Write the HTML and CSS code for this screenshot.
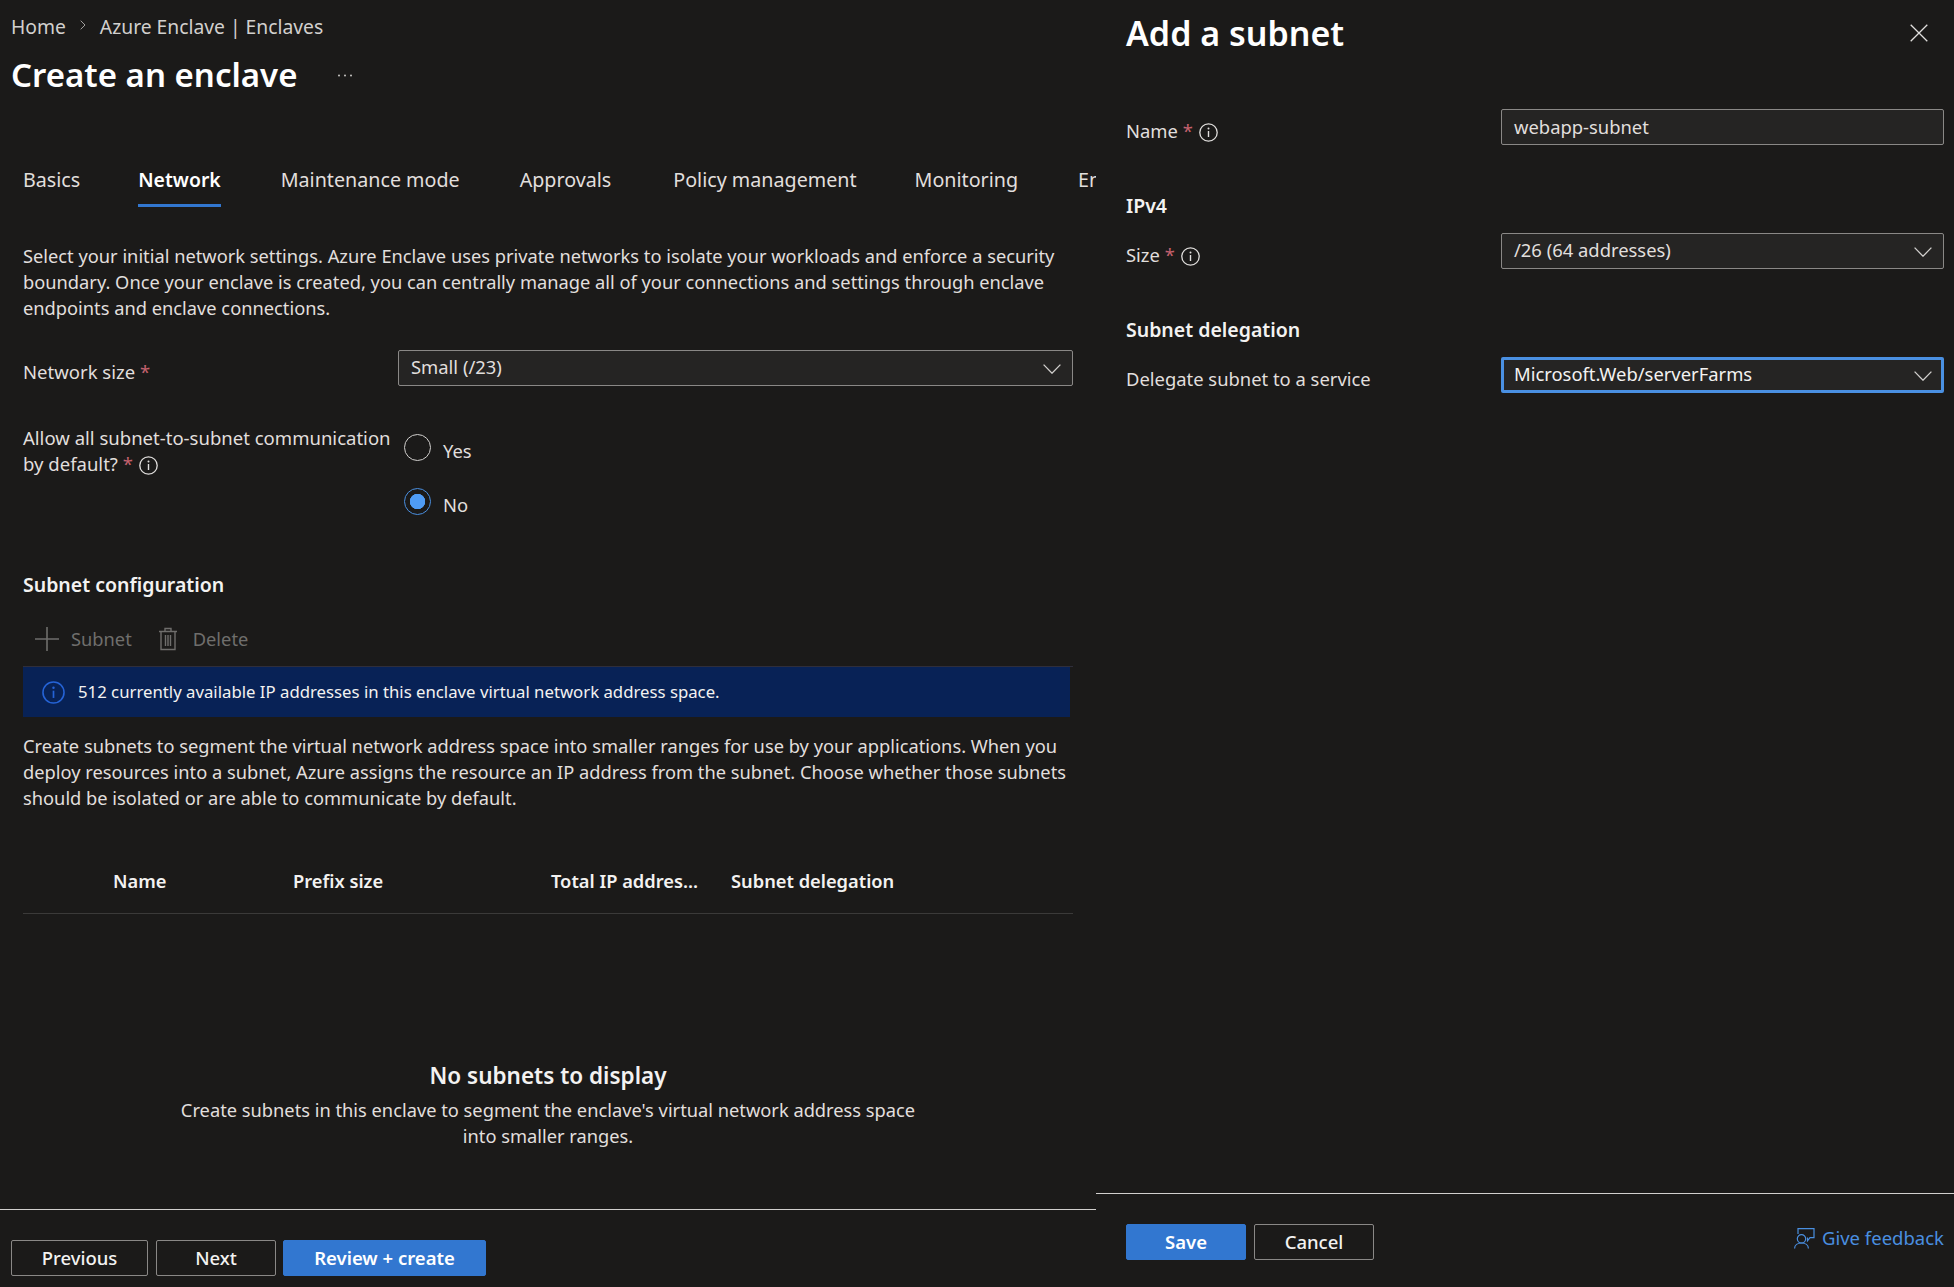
FILE: index.html
```html
<!DOCTYPE html>
<html lang="en">
<head>
<meta charset="utf-8">
<title>Create an enclave</title>
<link rel="stylesheet" href="styles.css">
</head>
<body>
<svg class="defs" width="0" height="0" aria-hidden="true">
  <symbol id="info" viewBox="0 0 19 19"><circle cx="9.5" cy="9.5" r="8.7" fill="none" stroke="currentColor" stroke-width="1.3"/><path d="M9.5 8v6" stroke="currentColor" stroke-width="1.4" fill="none"/><circle cx="9.5" cy="5.6" r="1" fill="currentColor"/></symbol>
  <symbol id="chev" viewBox="0 0 18 10"><path d="M.6.6 9 9.2 17.4.6" fill="none" stroke="currentColor" stroke-width="1.3"/></symbol>
</svg>

<section class="main-panel">
  <div class="main-scroll">
    <nav class="breadcrumb"><span>Home</span><svg class="crumb-sep" viewBox="0 0 6 10" width="6" height="10"><path d="M.7.7 5 5 .7 9.3" fill="none" stroke="currentColor"/></svg><span>Azure Enclave | Enclaves</span></nav>
    <div class="title-row"><h1 class="page-title">Create an enclave</h1><svg class="more" viewBox="0 0 16 3" width="16" height="3"><circle cx="2" cy="1.5" r="1" fill="currentColor"/><circle cx="8" cy="1.5" r="1" fill="currentColor"/><circle cx="14" cy="1.5" r="1" fill="currentColor"/></svg></div>
    <div class="tabs">
      <span class="tab">Basics</span>
      <span class="tab tab-active">Network</span>
      <span class="tab">Maintenance mode</span>
      <span class="tab">Approvals</span>
      <span class="tab">Policy management</span>
      <span class="tab">Monitoring</span>
      <span class="tab">Encryption</span>
    </div>
    <div class="content">
      <p class="intro">Select your initial network settings. Azure Enclave uses private networks to isolate your workloads and enforce a security boundary. Once your enclave is created, you can centrally manage all of your connections and settings through enclave endpoints and enclave connections.</p>

      <div class="form-row main-form row-size">
        <label class="field-label">Network size <span class="req">*</span></label>
        <div class="select"><span>Small (/23)</span><svg class="chev"><use href="#chev"/></svg></div>
      </div>

      <div class="form-row main-form row-allow">
        <label class="field-label label-top">Allow all subnet-to-subnet communication by default? <span class="req">*</span> <svg class="info"><use href="#info"/></svg></label>
        <div class="radios">
          <div class="radio-opt"><span class="radio"></span><span class="radio-text">Yes</span></div>
          <div class="radio-opt"><span class="radio radio-on"></span><span class="radio-text">No</span></div>
        </div>
      </div>

      <h2 class="section-title">Subnet configuration</h2>
      <div class="toolbar">
        <span class="tool"><svg viewBox="0 0 26 26" width="26" height="26"><path d="M13 1v24M1 13h24" stroke="currentColor" stroke-width="1.6" fill="none"/></svg>Subnet</span>
        <span class="tool tool-del"><svg viewBox="0 0 20 24" width="20" height="24"><path d="M1 4.5h18M7 4.5V1.5h6v3M3 4.5V22.5h14V4.5M7.5 8v11M10 8v11M12.5 8v11" stroke="currentColor" stroke-width="1.4" fill="none"/></svg>Delete</span>
      </div>
      <div class="banner"><svg class="banner-icon"><use href="#info"/></svg><span>512 currently available IP addresses in this enclave virtual network address space.</span></div>
      <p class="explain">Create subnets to segment the virtual network address space into smaller ranges for use by your applications. When you deploy resources into a subnet, Azure assigns the resource an IP address from the subnet. Choose whether those subnets should be isolated or are able to communicate by default.</p>

      <div class="table-head">
        <span></span><span>Name</span><span>Prefix size</span><span>Total IP addres...</span><span>Subnet delegation</span>
      </div>
      <div class="empty">
        <h3 class="empty-title">No subnets to display</h3>
        <p class="empty-text">Create subnets in this enclave to segment the enclave's virtual network address space into smaller ranges.</p>
      </div>
    </div>
  </div>
  <footer class="main-footer">
    <button class="btn btn-prev">Previous</button>
    <button class="btn btn-next">Next</button>
    <button class="btn btn-primary btn-review">Review + create</button>
  </footer>
</section>

<aside class="side-panel">
  <div class="side-body">
    <header class="side-head"><h1 class="page-title side-title">Add a subnet</h1><svg class="close" viewBox="0 0 18 18" width="18" height="18"><path d="M.7.7l16.6 16.6M17.3.7.7 17.3" stroke="currentColor" stroke-width="1.3" fill="none"/></svg></header>
    <div class="form-row side-name">
      <label class="field-label">Name <span class="req">*</span> <svg class="info"><use href="#info"/></svg></label>
      <div class="select select-input"><span>webapp-subnet</span></div>
    </div>
    <h2 class="section-title side-section">IPv4</h2>
    <div class="form-row side-row">
      <label class="field-label">Size <span class="req">*</span> <svg class="info"><use href="#info"/></svg></label>
      <div class="select"><span>/26 (64 addresses)</span><svg class="chev"><use href="#chev"/></svg></div>
    </div>
    <h2 class="section-title side-section">Subnet delegation</h2>
    <div class="form-row side-row">
      <label class="field-label">Delegate subnet to a service</label>
      <div class="select select-focus"><span>Microsoft.Web/serverFarms</span><svg class="chev"><use href="#chev"/></svg></div>
    </div>
  </div>
  <footer class="side-footer">
    <button class="btn btn-primary btn-save">Save</button>
    <button class="btn btn-cancel">Cancel</button>
    <a class="feedback"><svg viewBox="0 0 21 21" width="21" height="21"><path d="M4 6V.6h16v9h-4l-2.5 3.2V9.6" fill="none" stroke="currentColor" stroke-width="1.2"/><circle cx="7.5" cy="10.8" r="4.2" fill="none" stroke="currentColor" stroke-width="1.2"/><path d="M.6 20.5c0-3.5 3-5.500 6.900-5.500s6.900 2 6.900 5.500" fill="none" stroke="currentColor" stroke-width="1.2"/></svg><span>Give feedback</span></a>
  </footer>
</aside>
</body>
</html>
```

FILE: styles.css
```css
* { box-sizing: border-box; }
html, body { height: 100%; }
body {
  margin: 0;
  display: flex;
  height: 1287px;
  overflow: hidden;
  background: #1b1a19;
  color: #f3f2f1;
  font-family: "Noto Sans", "Open Sans", sans-serif;
  font-size: 18.27px;
  line-height: 26px;
}
.defs { position: absolute; }
h1, h2, h3, p { margin: 0; }

.main-panel { width: 1096px; flex: none; display: flex; flex-direction: column; }
.main-scroll { flex: 1; min-height: 0; overflow: hidden; }
.side-panel { flex: 1; display: flex; flex-direction: column; }
.side-body { flex: 1; padding: 0 10px 0 30px; }

.breadcrumb { display: flex; align-items: center; gap: 14px; margin-top: 14px; padding-left: 11px; color: #d2d0ce; font-size: 19.3px; }
.crumb-sep { color: #a19f9d; margin-top: -4px; }
.title-row { display: flex; align-items: center; margin-top: 13px; padding-left: 11px; height: 44px; }
.page-title { font-size: 33px; line-height: 44px; font-weight: 600; color: #fff; }
.side-title { font-size: 34px; }
.more { margin-left: 40px; color: #c8c6c4; }

.tabs { display: flex; gap: 60px; margin-top: 60px; padding-left: 23px; overflow: hidden; white-space: nowrap; color: #e1dfdd; font-size: 19.7px; }
.tab { line-height: 46px; padding-bottom: 1px; border-bottom: 3px solid transparent; }
.tab:nth-child(1) { margin-right: -2px; }
.tab:nth-child(4) { margin-right: 2px; }
.tab:nth-child(5) { margin-right: -2px; }
.tab-active { color: #fff; font-weight: 600; font-size: 19.4px; border-bottom-color: #3277d0; }

.content { padding: 0 23px; }
.intro { margin-top: 36px; color: #e1dfdd; }

.form-row { display: grid; grid-template-columns: 375px 1fr; font-size: 18.4px; }
.main-form .field-label { font-size: 18.55px; }
.row-size { margin-top: 29px; }
.row-allow { margin-top: 39px; margin-bottom: 30px; }
.field-label { padding-top: 9px; color: #e1dfdd; }
.label-top { padding-top: 0; }
.req { color: #c4616e; }
.info { width: 19px; height: 19px; vertical-align: -4px; margin-left: 1px; color: #e1dfdd; }

.select {
  height: 36px;
  display: flex;
  align-items: center;
  justify-content: space-between;
  padding: 0 11px 3px 12px;
  background: #252423;
  border: 1px solid #8a8886;
  border-radius: 2px;
  color: #e1dfdd;
}
.select-input { padding-bottom: 1px; }
.chev { width: 18px; height: 10px; flex: none; margin-top: 5px; color: #d2d0ce; }
.select-focus { border: 3px solid #4a90e2; padding: 0 9px 3px 10px; color: #f3f2f1; }

.radios { margin-top: 9px; padding-left: 6px; }
.radio-opt { display: flex; height: 54px; gap: 12px; }
.radio { width: 27px; height: 27px; flex: none; border: 1px solid #d2d0ce; border-radius: 50%; }
.radio-on { border-color: #4a8fe0; background: radial-gradient(circle, #4f9cf5 0 7.5px, transparent 8px); }
.radio-text { margin-top: 4px; color: #e1dfdd; }

.section-title { font-size: 19.5px; line-height: 26px; font-weight: 600; color: #f3f2f1; }

.toolbar { display: flex; align-items: center; gap: 26px; height: 55px; margin-top: 14px; padding-left: 11px; border-bottom: 1px solid #2f2e3a; color: #6f6e6c; }
.tool { display: flex; align-items: center; gap: 11px; }
.tool-del { gap: 15px; }

.banner { display: flex; align-items: center; height: 50px; margin-right: 3px; padding-left: 19px; gap: 13px; background: #082256; color: #f3f2f1; font-size: 16.75px; }
.banner-icon { width: 23px; height: 23px; color: #2563d6; flex: none; }
.explain { margin-top: 16px; color: #e1dfdd; }

.table-head {
  display: grid;
  grid-template-columns: 90px 180px 258px 180px 1fr;
  align-items: center;
  height: 65px;
  margin-top: 38px;
  border-bottom: 1px solid #3b3a39;
  font-weight: 600;
}
.empty { margin-top: 147px; text-align: center; }
.empty-title { font-size: 22.5px; line-height: 30px; font-weight: 600; }
.empty-text { width: 760px; margin: 6px auto 0; color: #e1dfdd; }

.main-footer { display: flex; gap: 8px; height: 78px; padding: 30px 0 0 11px; border-top: 1px solid #d2d0ce; }
.btn {
  height: 36px;
  padding: 0;
  font: inherit;
  font-size: 18.5px;
  font-weight: 500;
  color: #f3f2f1;
  background: transparent;
  border: 1px solid #8a8886;
  border-radius: 2px;
}
.btn-primary { background: #3277d0; border-color: #3277d0; color: #fff; font-weight: 600; }
.btn-prev { width: 137px; }
.btn-next { width: 120px; }
.btn-review { width: 203px; margin-left: -1px; }
.btn-save { width: 120px; }
.btn-cancel { width: 120px; }

.side-head { display: flex; justify-content: space-between; align-items: center; margin-top: 11px; padding-right: 16px; }
.close { color: #e1dfdd; }
.side-name { margin-top: 54px; }
.side-section { margin-top: 48px; }
.side-row { margin-top: 14px; }

.side-footer { display: flex; gap: 8px; height: 94px; padding: 30px 10px 0 30px; border-top: 1px solid #d2d0ce; }
.feedback { margin-left: auto; display: flex; align-items: center; gap: 7px; height: 28px; color: #4a8fe0; font-size: 18.5px; }
```
